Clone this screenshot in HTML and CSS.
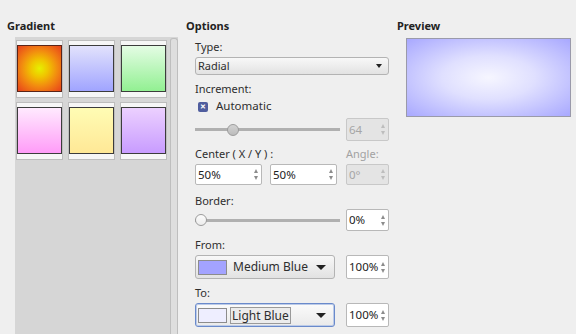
FILE: index.html
```html
<!DOCTYPE html>
<html>
<head>
<meta charset="utf-8">
<link rel="stylesheet" href="styles.css">
</head>
<body>
<div class="dlg">
  <section class="col col-grad">
    <h2 class="head">Gradient</h2>
    <div class="gpanel">
      <div class="tiles">
        <div class="tile"><div class="sw g1"></div></div>
        <div class="tile"><div class="sw g2"></div></div>
        <div class="tile"><div class="sw g3"></div></div>
        <div class="tile"><div class="sw g4"></div></div>
        <div class="tile"><div class="sw g5"></div></div>
        <div class="tile"><div class="sw g6"></div></div>
      </div>
      <div class="vscroll"></div>
    </div>
  </section>

  <section class="col col-opt">
    <h2 class="head">Options</h2>
    <div class="opts">
      <div class="lbl l-type">Type:</div>
      <div class="combo c-type"><span class="ctext">Radial</span><i class="arrow"></i></div>

      <div class="lbl l-inc">Increment:</div>
      <div class="check-row"><span class="cbox">&#x2715;</span><span>Automatic</span></div>

      <div class="srow r-inc">
        <div class="slider"><span class="thumb t-inc"></span></div>
        <div class="spin dis s-inc"><span class="stext">64</span><span class="arrows"><i class="up"></i><i class="dn"></i></span></div>
      </div>

      <div class="lrow l-center"><span class="lbl-c">Center ( X / Y ) :</span><span class="lbl-a">Angle:</span></div>
      <div class="crow">
        <div class="spin s-cx"><span class="stext">50%</span><span class="arrows"><i class="up"></i><i class="dn"></i></span></div>
        <div class="spin s-cy"><span class="stext">50%</span><span class="arrows"><i class="up"></i><i class="dn"></i></span></div>
        <div class="spin dis s-ang"><span class="stext">0°</span><span class="arrows"><i class="up"></i><i class="dn"></i></span></div>
      </div>

      <div class="lbl l-border">Border:</div>
      <div class="srow r-border">
        <div class="slider"><span class="thumb t-border"></span></div>
        <div class="spin s-border"><span class="stext">0%</span><span class="arrows"><i class="up"></i><i class="dn"></i></span></div>
      </div>

      <div class="lbl l-from">From:</div>
      <div class="frow r-from">
        <div class="combo c-color"><span class="swatch medium"></span><span class="ctext">Medium Blue</span><i class="arrow big"></i></div>
        <div class="spin s-pct"><span class="stext">100%</span><span class="arrows"><i class="up"></i><i class="dn"></i></span></div>
      </div>

      <div class="lbl l-to">To:</div>
      <div class="frow r-to">
        <div class="combo c-color focus"><span class="swatch light"></span><span class="ctext sel">Light Blue</span><i class="arrow big"></i></div>
        <div class="spin s-pct"><span class="stext">100%</span><span class="arrows"><i class="up"></i><i class="dn"></i></span></div>
      </div>
    </div>
  </section>

  <section class="col col-prev">
    <h2 class="head">Preview</h2>
    <div class="preview"></div>
  </section>
</div>
</body>
</html>
```

FILE: styles.css
```css
html, body {
  margin: 0;
  padding: 0;
  background: #efefef;
  overflow: hidden;
}
body {
  width: 576px;
  height: 334px;
  font-family: "Noto Sans", "Open Sans", sans-serif;
  font-size: 11px;
  color: #2e2e2e;
}
.dlg {
  display: flex;
  align-items: flex-start;
  padding-left: 7px;
}
.col { display: flex; flex-direction: column; }
.col-grad { width: 172px; }
.col-opt { width: 203px; margin-left: 7px; }
.col-prev { width: 173px; margin-left: 8px; }

.head {
  margin: 0;
  padding-top: 19px;
  font-size: 11px;
  line-height: 14px;
  font-weight: bold;
  color: #222;
}

/* gradient list */
.gpanel {
  margin-top: 4px;
  margin-left: 8px;
  width: 163px;
  height: 300px;
  background: #d6d6d6;
  display: flex;
}
.tiles {
  width: 155px;
  padding: 3px 0 0 1px;
  display: grid;
  grid-template-columns: repeat(3, 47px);
  grid-auto-rows: 58px;
  column-gap: 5px;
  row-gap: 4px;
  align-content: start;
}
.tile {
  box-sizing: border-box;
  width: 47px;
  height: 58px;
  background: #f6f6f6;
  border: 1px solid #bdbdbd;
  padding-top: 4px;
}
.sw {
  box-sizing: border-box;
  width: 45px;
  height: 47px;
  border: 1px solid #3c3c3c;
}
.g1 { background: radial-gradient(circle at 50% 50%, #e6f000 0%, #f0c400 28%, #f28a10 58%, #e8401c 100%); border-color: #5a2418; }
.g2 { background: linear-gradient(#e2e2fc, #a0a4ff); }
.g3 { background: linear-gradient(#e4fce4, #92f092); }
.g4 { background: linear-gradient(#ffeafe, #ff9cf8); }
.g5 { background: linear-gradient(#fffcb4, #ffe896); }
.g6 { background: linear-gradient(#ecd0ff, #c89cff); }
.vscroll {
  margin-left: auto;
  margin-top: 1px;
  width: 6px;
  background: #dedede;
  border: 1px solid #bebebe;
  border-bottom: none;
  border-radius: 3px 3px 0 0;
}

/* options */
.opts {
  display: flex;
  flex-direction: column;
  padding-left: 9px;
}
.lbl, .lrow { line-height: 14px; height: 14px; }
.l-type { margin-top: 7px; }
.l-inc { margin-top: 7px; }
.l-center { margin-top: 6px; }
.l-border { margin-top: 9px; }
.l-from { margin-top: 7px; }
.l-to { margin-top: 7px; }

.lrow { display: flex; }
.lbl-c { width: 151px; }
.lbl-a { color: #a2a2a2; }

.combo {
  box-sizing: border-box;
  display: flex;
  align-items: center;
  border: 1px solid #b3b3b3;
  border-radius: 3px;
  background: linear-gradient(#f8f8f8, #e2e2e2);
}
.c-type {
  margin-top: 3px;
  width: 194px;
  height: 18px;
  padding: 0 0 0 2px;
}
.ctext { flex: 1; line-height: 14px; }
.arrow {
  width: 0; height: 0;
  border-left: 3.5px solid transparent;
  border-right: 3.5px solid transparent;
  border-top: 4px solid #222;
  margin-right: 6px;
}
.arrow.big {
  border-left-width: 5px;
  border-right-width: 5px;
  border-top-width: 5px;
  margin-right: 8px;
}

.check-row {
  margin-top: 3px;
  height: 14px;
  line-height: 14px;
  display: flex;
  align-items: center;
  font-size: 11.5px;
}
.cbox {
  box-sizing: border-box;
  width: 10px;
  height: 10px;
  margin: 2px 8px 0 3px;
  border-radius: 2px;
  background: #4f5d9e;
  color: #fff;
  font-size: 7px;
  line-height: 10px;
  text-align: center;
  font-weight: bold;
}

.srow { display: flex; align-items: center; }
.r-inc { margin-top: 5px; }
.r-border { margin-top: 1px; }
.slider {
  width: 145px;
  height: 12px;
  display: flex;
  align-items: center;
  background: linear-gradient(#b0b0b0, #b0b0b0) center / 100% 3px no-repeat;
  border-radius: 2px;
  margin-right: 6px;
}
.thumb {
  box-sizing: border-box;
  width: 12px;
  height: 12px;
  border-radius: 50%;
  border: 1px solid #9c9c9c;
}
.t-inc { margin-left: 32px; background: linear-gradient(#d2d2d2, #bcbcbc); }
.t-border { margin-left: 0; background: linear-gradient(#fcfcfc, #ececec); }

.spin {
  box-sizing: border-box;
  display: flex;
  align-items: center;
  background: #fff;
  border: 1px solid #b8b8b8;
  border-radius: 2px;
  padding-left: 2px;
  color: #222;
  font-size: 11.5px;
}
.spin.dis { background: #e4e4e4; color: #a6a6a6; border-color: #c8c8c8; }
.stext { flex: 1; line-height: 14px; }
.arrows {
  display: flex;
  flex-direction: column;
  gap: 3px;
  margin-right: 3px;
}
.arrows i { width: 0; height: 0; border-left: 2.5px solid transparent; border-right: 2.5px solid transparent; }
.arrows .up { border-bottom: 4px solid #8c8c8c; }
.arrows .dn { border-top: 4px solid #8c8c8c; }
.spin.dis .arrows .up { border-bottom-color: #bdbdbd; }
.spin.dis .arrows .dn { border-top-color: #bdbdbd; }

.s-inc { width: 43px; height: 23px; }
.crow { margin-top: 3px; display: flex; }
.s-cx { width: 67px; height: 21px; }
.s-cy { width: 67px; height: 21px; margin-left: 8px; }
.s-ang { width: 43px; height: 21px; margin-left: 9px; }
.s-border { width: 43px; height: 22px; }

.frow { display: flex; align-items: center; margin-top: 3px; }
.c-color {
  width: 140px;
  height: 24px;
  padding-left: 2px;
  margin-right: 11px;
  font-size: 12px;
}
.c-color.focus {
  border: 1px solid #6a8acb;
  box-shadow: inset 0 0 0 1px #bccbe8;
  background: linear-gradient(#fbfbfb, #eaeaea);
}
.swatch {
  box-sizing: border-box;
  width: 29px;
  height: 15px;
  border: 1px solid #8c8c8c;
  margin-right: 6px;
}
.swatch.medium { background: #a3a3ff; }
.swatch.light { background: #eeeeff; margin-right: 3px; }
.ctext.sel {
  flex: none;
  border: 1px solid #9a9a9a;
  background: #ececec;
  padding: 0 1px;
  margin-right: auto;
  line-height: 15px;
}
.s-pct { width: 43px; height: 24px; }

/* preview */
.preview {
  box-sizing: border-box;
  margin-top: 5px;
  margin-left: 9px;
  width: 165px;
  height: 79px;
  border: 1px solid #9a9aaa;
  background: radial-gradient(ellipse farthest-corner at 50% 50%, #f6f6ff 0%, #e0e0ff 40%, #a8a8ff 100%);
}
```
